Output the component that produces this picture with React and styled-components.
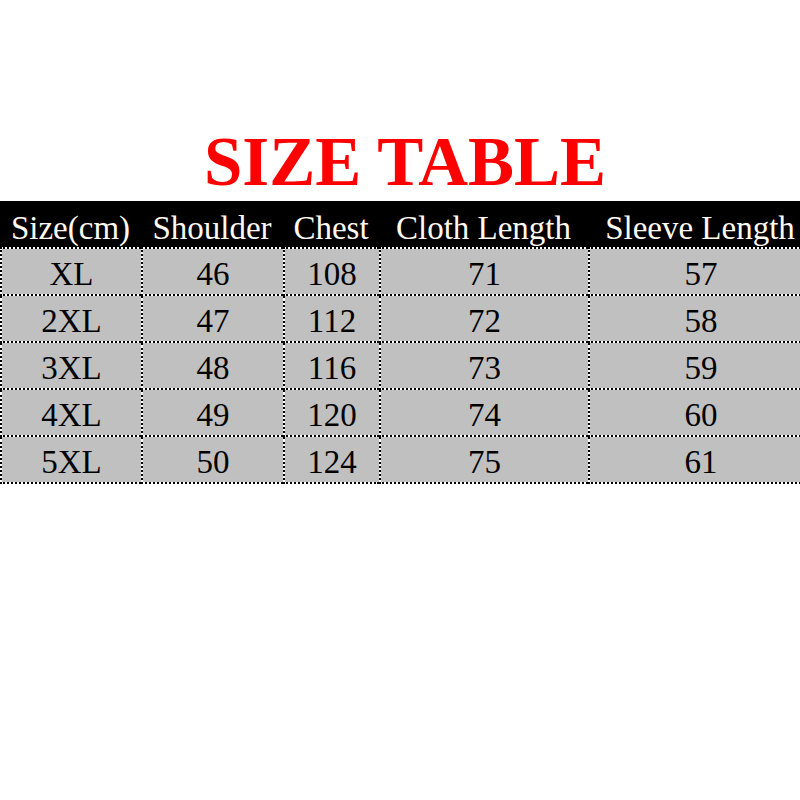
import React from "react";
import styled, { createGlobalStyle } from "styled-components";

const Global = createGlobalStyle`
  html, body { margin: 0; padding: 0; background: #ffffff; overflow: hidden; }
  body { font-family: "Liberation Serif", "Times New Roman", serif; }
`;

const Page = styled.div`
  width: 800px;
  height: 800px;
  overflow: hidden;
  background: #ffffff;
`;

const Title = styled.h1`
  margin: 0;
  padding: 128px 0 0 10px;
  box-sizing: border-box;
  height: 201px;
  text-align: center;
  font-family: "Liberation Serif", "Times New Roman", serif;
  font-weight: 700;
  font-size: 69px;
  line-height: 69px;
  color: #ff0000;
`;

const Table = styled.table`
  width: 812px;
  table-layout: fixed;
  border-collapse: separate;
  border-spacing: 0;
  background: #ffffff;
  font-family: "Liberation Serif", "Times New Roman", serif;
  font-size: 33px;
`;

const HeadCell = styled.th`
  height: 46px;
  padding: 8px 0 0 0;
  box-sizing: border-box;
  background: #000000;
  color: #fffaf0;
  font-weight: 400;
  text-align: center;
  white-space: nowrap;
  vertical-align: middle;
  line-height: 36px;
`;

const Cell = styled.td`
  box-sizing: border-box;
  padding: 4px 0 0 0;
  background: #c0c0c0;
  background-clip: padding-box;
  color: #000000;
  text-align: center;
  vertical-align: middle;
  line-height: 36px;
  border-bottom: 2px dotted #000000;
  border-left: 2px dotted #000000;
  border-top: ${(p) => (p.$first ? "2px dotted #000000" : "none")};
  height: ${(p) => (p.$first ? "49px" : "47px")};
`;

const widths = [141, 142, 96, 209, 224];
const headers = ["Size(cm)", "Shoulder", "Chest", "Cloth Length", "Sleeve Length"];
const rows = [
  ["XL", "46", "108", "71", "57"],
  ["2XL", "47", "112", "72", "58"],
  ["3XL", "48", "116", "73", "59"],
  ["4XL", "49", "120", "74", "60"],
  ["5XL", "50", "124", "75", "61"],
];

export default function App() {
  return (
    <Page>
      <Global />
      <Title>SIZE TABLE</Title>
      <Table>
        <colgroup>
          {widths.map((w, i) => (
            <col key={i} style={{ width: w }} />
          ))}
        </colgroup>
        <thead>
          <tr>
            {headers.map((h) => (
              <HeadCell key={h}>{h}</HeadCell>
            ))}
          </tr>
        </thead>
        <tbody>
          {rows.map((r, ri) => (
            <tr key={ri}>
              {r.map((c, ci) => (
                <Cell key={ci} $first={ri === 0}>
                  {c}
                </Cell>
              ))}
            </tr>
          ))}
        </tbody>
      </Table>
    </Page>
  );
}
